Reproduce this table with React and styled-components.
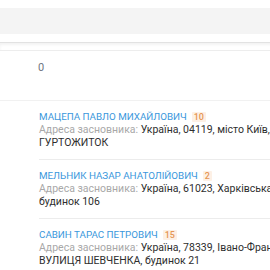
import React from 'react';
import styled, { createGlobalStyle } from 'styled-components';

const GlobalStyle = createGlobalStyle`
  html, body {
    margin: 0;
    padding: 0;
    background: #fff;
    overflow: hidden;
  }
  body {
    font-family: Roboto, "Liberation Sans", Arial, sans-serif;
    font-size: 10.5px;
    color: #333;
  }
`;

const Page = styled.div`
  width: 500px;
  padding-top: 8px;
`;

const TopBand = styled.div`
  height: 26px;
  background: #f4f4f4;
`;

const TabStrip = styled.div`
  margin-top: 8px;
  height: 7px;
  border-top: 1px solid #e2e2e2;
  border-bottom: 1px solid #ededed;
  box-shadow: inset 0 2px 3px rgba(0, 0, 0, 0.05);
`;

const Counter = styled.div`
  padding: 10px 0 26px 38px;
  line-height: 13px;
  font-size: 11px;
  color: #6f7682;
  border-bottom: 1px solid #f1f1f1;
`;

const List = styled.div`
  padding-left: 39px;
`;

const Item = styled.div`
  padding: 9px 0 10px;
  line-height: 13px;
  border-bottom: ${({ $last }) => ($last ? 'none' : '1px solid #ececec')};
`;

const NameRow = styled.div`
  display: flex;
  align-items: center;
  gap: 5px;
  height: 13px;
`;

const Name = styled.a`
  font-size: 9.8px;
  color: #3a97dc;
  text-decoration: none;
  text-transform: uppercase;
`;

const Badge = styled.span`
  display: inline-block;
  padding: 0 2px;
  height: 10px;
  line-height: 10px;
  font-size: 9px;
  font-weight: 500;
  color: #e59654;
  background: #fdf0e5;
  border-radius: 1px;
`;

const Address = styled.div`
  color: #2e2e2e;
`;

const Label = styled.span`
  color: #a8a8a8;
`;

const founders = [
  {
    name: 'Мацепа Павло Михайлович',
    count: 10,
    line1: 'Україна, 04119, місто Київ, ВУЛИЦЯ ДЕГТЯРІВСЬКА, будинок 27-Т,',
    line2: 'ГУРТОЖИТОК',
  },
  {
    name: 'Мельник Назар Анатолійович',
    count: 2,
    line1: 'Україна, 61023, Харківська обл., місто Харків, ВУЛИЦЯ СУМСЬКА,',
    line2: 'будинок 106',
  },
  {
    name: 'Савин Тарас Петрович',
    count: 15,
    line1: 'Україна, 78339, Івано-Франківська обл., Снятинський район, село Русів,',
    line2: 'ВУЛИЦЯ ШЕВЧЕНКА, будинок 21',
  },
];

const App = () => (
  <>
    <GlobalStyle />
    <Page>
      <TopBand />
      <TabStrip />
      <Counter>0</Counter>
      <List>
        {founders.map((f, i) => (
          <Item key={f.name} $last={i === founders.length - 1}>
            <NameRow>
              <Name href="#">{f.name}</Name>
              <Badge>{f.count}</Badge>
            </NameRow>
            <Address>
              <Label>Адреса засновника: </Label>
              {f.line1}
              <br />
              {f.line2}
            </Address>
          </Item>
        ))}
      </List>
    </Page>
  </>
);

export default App;
